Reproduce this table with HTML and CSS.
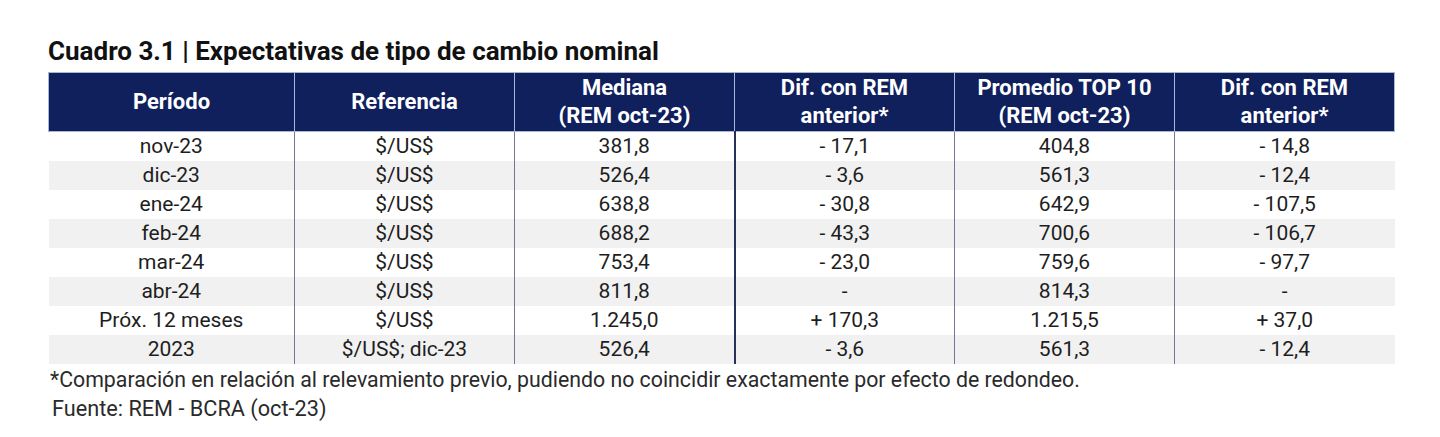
FILE: index.html
```html
<!DOCTYPE html>
<html lang="es">
<head>
<meta charset="utf-8">
<link rel="stylesheet" href="styles.css">
</head>
<body>
<div class="page">
  <h1 class="title">Cuadro 3.1 | Expectativas de tipo de cambio nominal</h1>
  <table class="tbl">
    <colgroup>
      <col class="c1"><col class="c2"><col class="c2"><col class="c2"><col class="c2"><col class="c2">
    </colgroup>
    <thead>
      <tr>
        <th>Período</th>
        <th>Referencia</th>
        <th>Mediana<br>(REM oct-23)</th>
        <th class="thick">Dif. con REM<br>anterior*</th>
        <th>Promedio TOP 10<br>(REM oct-23)</th>
        <th>Dif. con REM<br>anterior*</th>
      </tr>
    </thead>
    <tbody>
      <tr><td>nov-23</td><td>$/US$</td><td>381,8</td><td class="thick">- 17,1</td><td>404,8</td><td>- 14,8</td></tr>
      <tr><td>dic-23</td><td>$/US$</td><td>526,4</td><td class="thick">- 3,6</td><td>561,3</td><td>- 12,4</td></tr>
      <tr><td>ene-24</td><td>$/US$</td><td>638,8</td><td class="thick">- 30,8</td><td>642,9</td><td>- 107,5</td></tr>
      <tr><td>feb-24</td><td>$/US$</td><td>688,2</td><td class="thick">- 43,3</td><td>700,6</td><td>- 106,7</td></tr>
      <tr><td>mar-24</td><td>$/US$</td><td>753,4</td><td class="thick">- 23,0</td><td>759,6</td><td>- 97,7</td></tr>
      <tr><td>abr-24</td><td>$/US$</td><td>811,8</td><td class="thick">-</td><td>814,3</td><td>-</td></tr>
      <tr><td>Próx. 12 meses</td><td>$/US$</td><td>1.245,0</td><td class="thick">+ 170,3</td><td>1.215,5</td><td>+ 37,0</td></tr>
      <tr><td>2023</td><td>$/US$; dic-23</td><td>526,4</td><td class="thick">- 3,6</td><td>561,3</td><td>- 12,4</td></tr>
    </tbody>
  </table>
  <p class="note">*Comparación en relación al relevamiento previo, pudiendo no coincidir exactamente por efecto de redondeo.</p>
  <p class="source">Fuente: REM - BCRA (oct-23)</p>
</div>
</body>
</html>
```
FILE: styles.css
```css
html, body {
  margin: 0;
  padding: 0;
  background: #ffffff;
}
.page {
  padding: 35px 0 0 48px;
  font-family: Roboto, "Liberation Sans", sans-serif;
  color: #1e1e1e;
}
.title {
  margin: 0 0 5px 0;
  font-size: 26px;
  line-height: 32px;
  font-weight: 700;
  font-stretch: 88%;
  color: #111111;
}
.tbl {
  border-collapse: collapse;
  table-layout: fixed;
  width: 1343px;
}
.c1 { width: 246px; }
.c2 { width: 220px; }
.tbl th {
  background: #0f205c;
  color: #ffffff;
  font-weight: 700;
  font-size: 22px;
  line-height: 28px;
  font-stretch: 90%;
  height: 58px;
  padding: 0;
  border: 1px solid #a9b7d6;
  text-align: center;
}
.tbl td {
  padding: 0;
  height: 29px;
  font-size: 21px;
  line-height: 29px;
  font-stretch: 90%;
  text-align: center;
  color: #1e1e1e;
  border-left: 1px solid #6f7898;
}
.tbl td:first-child { border-left: none; }
.tbl td.thick { border-left: 2px solid #26315c; }
.tbl tbody tr:nth-child(even) td { background: #f1f1f1; }
.note {
  margin: 3px 0 0 2px;
  font-size: 21.3px;
  line-height: 26px;
  color: #2a2a2a;
}
.source {
  margin: 3px 0 0 4px;
  font-size: 21.7px;
  line-height: 26px;
  font-stretch: 95%;
  color: #2a2a2a;
}
```
